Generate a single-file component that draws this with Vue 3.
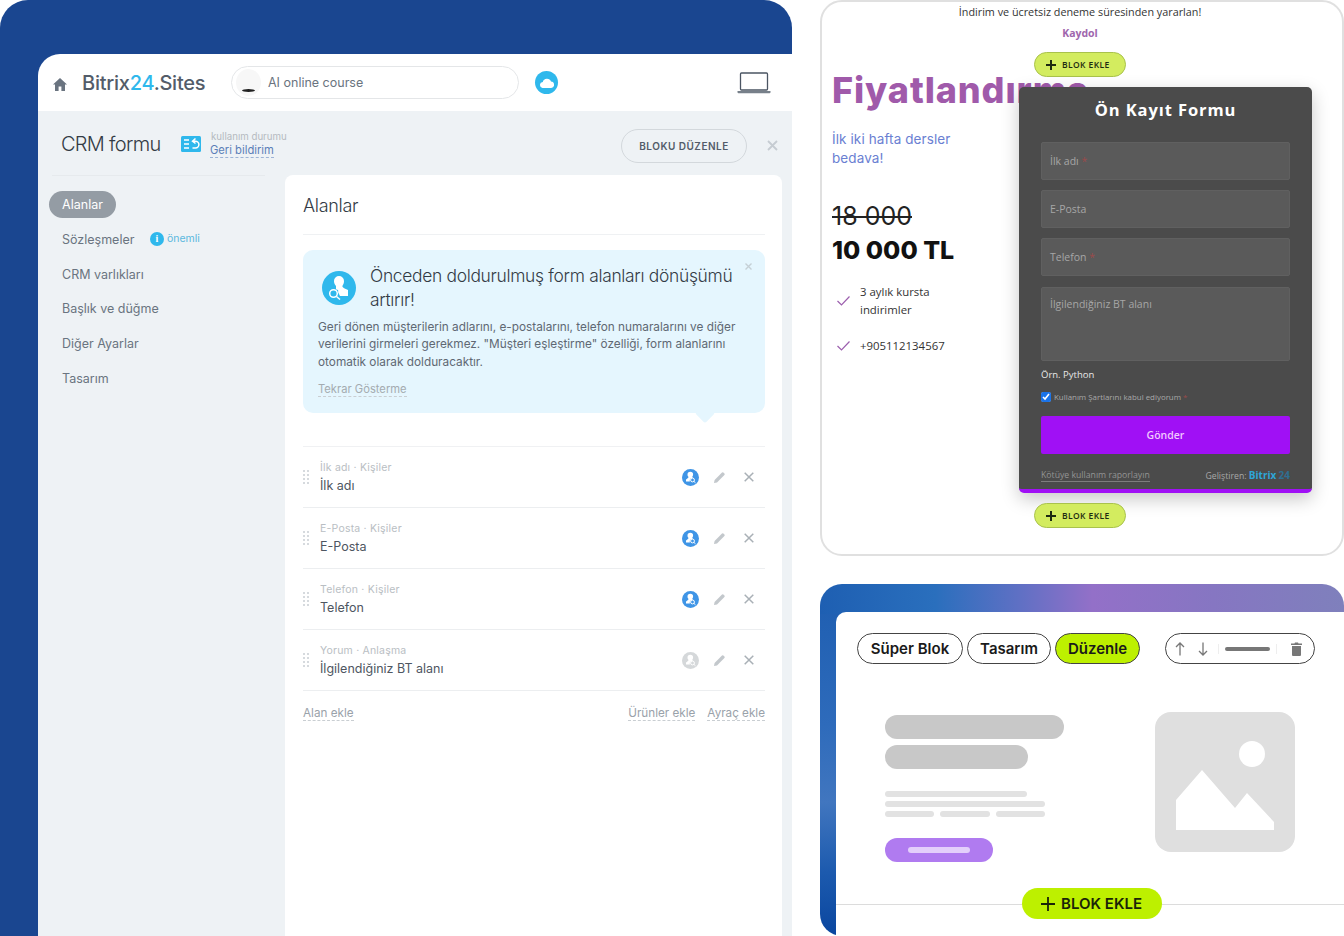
<script setup>
const navItems = ['Sözleşmeler', 'CRM varlıkları', 'Başlık ve düğme', 'Diğer Ayarlar', 'Tasarım']
const fields = [
  { meta: 'İlk adı · Kişiler', name: 'İlk adı', on: true },
  { meta: 'E-Posta · Kişiler', name: 'E-Posta', on: true },
  { meta: 'Telefon · Kişiler', name: 'Telefon', on: true },
  { meta: 'Yorum · Anlaşma', name: 'İlgilendiğiniz BT alanı', on: false }
]
</script>

<template>
  <div class="page">
    <section class="builder">
      <div class="window">
        <header class="topbar">
          <svg class="home" width="14" height="13" viewBox="0 0 14 13"><path d="M7 0 14 6.5H12V13H8.4V8.6H5.6V13H2V6.5H0Z" fill="#6a7480"/></svg>
          <div class="logo">Bitrix<span>24</span>.Sites</div>
          <div class="site-pill">
            <div class="thumb"><i></i></div>
            <span>AI online course</span>
          </div>
          <div class="cloud">
            <svg width="14" height="10" viewBox="0 0 14 10"><path d="M3.2 10a3 3 0 0 1-.4-6A4.3 4.3 0 0 1 11 3.6 3.2 3.2 0 0 1 10.8 10Z" fill="#fff"/></svg>
          </div>
          <svg class="laptop" width="34" height="22" viewBox="0 0 34 22"><rect x="3.5" y="1" width="27" height="17" rx="1" fill="none" stroke="#4b5563" stroke-width="1.3"/><path d="M0.5 19h33v1.2a1 1 0 0 1-1 1h-31a1 1 0 0 1-1-1Z" fill="#77808a"/></svg>
        </header>
        <div class="workspace">
          <div class="title-row">
            <div class="title-left">
              <h1>CRM formu</h1>
              <svg class="exchange" width="20" height="16" viewBox="0 0 20 16">
                <rect width="20" height="16" rx="1.5" fill="#2fb8ec"/>
                <path d="M3 4h5M3 8h5M3 12h5" stroke="#fff" stroke-width="1.6"/>
                <path d="M14.5 2.500 11.500 5.200 14.500 7.500M11.500 5.200h3a3.400 3.400 0 0 1 0 6.800h-3" fill="none" stroke="#fff" stroke-width="1.5"/>
              </svg>
              <div class="usage">
                <small>kullanım durumu</small>
                <a>Geri bildirim</a>
              </div>
            </div>
            <button class="edit-btn">BLOKU DÜZENLE</button>
            <svg class="title-close" width="11" height="11" viewBox="0 0 11 11"><path d="M1 1l9 9M10 1l-9 9" stroke="#c6ccd2" stroke-width="1.8"/></svg>
          </div>
          <div class="columns">
            <aside class="sidebar">
              <div class="sidebar-line"></div>
              <div class="nav-active">Alanlar</div>
              <div v-for="item in navItems" :key="item" class="nav-item">
                {{ item }}
                <span v-if="item === 'Sözleşmeler'" class="important">
                  <i>i</i>önemli
                </span>
              </div>
            </aside>
            <main class="card">
              <h2>Alanlar</h2>
              <div class="tip">
                <svg class="tip-close" width="7" height="7" viewBox="0 0 7 7"><path d="M.5.5l6 6M6.500.5l-6 6" stroke="#c5d0d6" stroke-width="1.400"/></svg>
                <div class="tip-head">
                  <svg width="34" height="34" viewBox="0 0 34 34">
                    <circle cx="17" cy="17" r="17" fill="#2fb8ec"/>
                    <path d="M14 15c-1.500-2-2-3-2-5a5 5 0 0 1 10 0c0 2-.6 3.500-1.600 5 0 1.400 1 2 5.600 4v6H18l-2-4c1-1.500-.5-3-2-2.500Z" fill="#fff"/>
                    <circle cx="11.500" cy="22.500" r="3.800" fill="none" stroke="#fff" stroke-width="1.500"/>
                    <path d="M14.500 25.500l3.500 3" stroke="#fff" stroke-width="1.500"/>
                  </svg>
                  <h3>Önceden doldurulmuş form alanları dönüşümü artırır!</h3>
                </div>
                <p>Geri dönen müşterilerin adlarını, e-postalarını, telefon numaralarını ve diğer verilerini girmeleri gerekmez. "Müşteri eşleştirme" özelliği, form alanlarını otomatik olarak dolduracaktır.</p>
                <a class="dashed muted">Tekrar Gösterme</a>
              </div>
              <div class="field-list">
                <div v-for="f in fields" :key="f.meta" class="field-row">
                  <div class="grip"><i v-for="n in 8" :key="n"></i></div>
                  <div class="field-text">
                    <small>{{ f.meta }}</small>
                    <span>{{ f.name }}</span>
                  </div>
                  <svg class="crm-icon" width="17" height="17" viewBox="0 0 17 17">
                    <circle cx="8.500" cy="8.500" r="8.500" :fill="f.on ? '#3f95e6' : '#d5d8da'"/>
                    <path d="M6.500 8c-.8-1-1-1.600-1-2.500a2.800 2.800 0 0 1 5.600 0c0 1-.3 1.800-.9 2.500 0 .4.500.8 1 1.100-1.500-.3-2.800.4-3.300 1.700-.2.600-.2 1.200 0 1.700H4V10.500c1-.8 2.400-1.400 2.500-2.500Z" fill="#fff"/>
                    <circle cx="10.500" cy="11" r="1.900" fill="none" stroke="#fff" stroke-width="1"/>
                    <path d="M12 12.500l1.500 1.300" stroke="#fff" stroke-width="1"/>
                  </svg>
                  <svg class="pencil" width="11" height="11" viewBox="0 0 11 11"><path d="M0 11l.6-3L8 .6a1 1 0 0 1 1.400 0l1 1a1 1 0 0 1 0 1.400L3 10.400Z" fill="#c3c8cc"/></svg>
                  <svg class="row-close" width="10" height="10" viewBox="0 0 10 10"><path d="M.7.7l8.600 8.600M9.300.7.700 9.300" stroke="#a9b0b6" stroke-width="1.500"/></svg>
                </div>
              </div>
              <div class="card-links">
                <a class="dashed">Alan ekle</a>
                <a class="dashed push">Ürünler ekle</a>
                <a class="dashed">Ayraç ekle</a>
              </div>
            </main>
          </div>
        </div>
      </div>
    </section>

    <div class="right">
      <section class="preview">
        <p class="promo">İndirim ve ücretsiz deneme süresinden yararlan!</p>
        <p class="signup">Kaydol</p>
        <div class="pricing">
          <h2>Fiyatlandırma</h2>
          <p class="free">İlk iki hafta dersler<br>bedava!</p>
          <div class="old-price">18 000</div>
          <div class="new-price">10 000 TL</div>
          <div class="check-row">
            <svg width="13" height="10" viewBox="0 0 13 10"><path d="M.5 5l4 4 8-8.500" fill="none" stroke="#9c5fae" stroke-width="1.200"/></svg>
            <span>3 aylık kursta<br>indirimler</span>
          </div>
          <div class="check-row">
            <svg width="13" height="10" viewBox="0 0 13 10"><path d="M.5 5l4 4 8-8.500" fill="none" stroke="#9c5fae" stroke-width="1.200"/></svg>
            <span>+905112134567</span>
          </div>
        </div>
        <button class="small-add top-add">
          <svg width="10" height="10" viewBox="0 0 10 10"><path d="M5 0v10M0 5h10" stroke="#1d2a10" stroke-width="2"/></svg>
          BLOK EKLE
        </button>
        <form class="crm-form" @submit.prevent>
          <h3>Ön Kayıt Formu</h3>
          <div class="input">İlk adı <em>*</em></div>
          <div class="input">E-Posta</div>
          <div class="input">Telefon <em>*</em></div>
          <div class="input area">İlgilendiğiniz BT alanı</div>
          <div class="hint">Örn. Python</div>
          <label class="terms">
            <input type="checkbox" checked>
            <span>Kullanım Şartlarını kabul ediyorum <em>*</em></span>
          </label>
          <button class="send">Gönder</button>
          <div class="form-foot">
            <a>Kötüye kullanım raporlayın</a>
            <span>Geliştiren: <b>Bitrix</b> <b class="dim">24</b></span>
          </div>
        </form>
        <button class="small-add bottom-add">
          <svg width="10" height="10" viewBox="0 0 10 10"><path d="M5 0v10M0 5h10" stroke="#1d2a10" stroke-width="2"/></svg>
          BLOK EKLE
        </button>
      </section>

      <section class="editor">
        <div class="sheet">
          <div class="tools">
            <div class="tool w106">Süper Blok</div>
            <div class="tool w84">Tasarım</div>
            <div class="tool w85 lime">Düzenle</div>
            <div class="controls">
              <svg width="10" height="14" viewBox="0 0 10 14"><path d="M5 13.500V1M1 5l4-4 4 4" fill="none" stroke="#777" stroke-width="1.300"/></svg>
              <svg width="10" height="14" viewBox="0 0 10 14"><path d="M5 .5V13M1 9l4 4 4-4" fill="none" stroke="#777" stroke-width="1.300"/></svg>
              <i class="ctl-sep"></i>
              <i class="ctl-bar"></i>
              <i class="ctl-sep"></i>
              <svg width="11" height="14" viewBox="0 0 11 14"><path d="M0 1.500h3.500L4 .5h3l.5 1H11V3H0ZM1 4h9v9a1 1 0 0 1-1 1H2a1 1 0 0 1-1-1Z" fill="#777"/></svg>
            </div>
          </div>
          <div class="mock">
            <div class="mock-text">
              <i class="bar-lg w178"></i>
              <i class="bar-lg w143 gap6"></i>
              <i class="bar-sm w142 gap22"></i>
              <i class="bar-sm w160 gap4"></i>
              <div class="bar-split"><i></i><i></i><i></i></div>
              <div class="mock-btn"><i></i></div>
            </div>
            <svg class="mock-img" width="140" height="140" viewBox="0 0 140 140">
              <rect width="140" height="140" rx="16" fill="#dfdfdf"/>
              <circle cx="97" cy="42" r="13" fill="#fff"/>
              <path d="M21 118V88L47 58 80 96 92 81 119 110V118Z" fill="#fff"/>
            </svg>
          </div>
          <div class="add-line">
            <button class="big-add">
              <svg width="14" height="14" viewBox="0 0 14 14"><path d="M7 0v14M0 7h14" stroke="#1a2408" stroke-width="1.800"/></svg>
              BLOK EKLE
            </button>
          </div>
        </div>
      </section>
    </div>
  </div>
</template>

<style>
html, body { margin: 0; background: #fff; }
</style>

<style scoped>
* { box-sizing: border-box; }
.page {
  width: 1344px;
  height: 936px;
  overflow: hidden;
  display: grid;
  grid-template-columns: 792px 524px;
  column-gap: 28px;
  font-family: "Inter", "Liberation Sans", sans-serif;
  background: #fff;
}
h1, h2, h3, p { margin: 0; font-weight: 400; }

/* left */
.builder {
  height: 936px;
  padding: 54px 0 0 38px;
  background: #1a4690;
  border-radius: 28px 28px 0 0;
}
.window { height: 882px; display: flex; flex-direction: column; border-radius: 22px 0 0 0; overflow: hidden; }
.topbar {
  height: 57px;
  flex: none;
  background: #fff;
  display: flex;
  align-items: center;
  padding-left: 15px;
}
.home { margin-top: 3px; }
.logo { margin-left: 15px; font-size: 20px; font-weight: 500; color: #535c69; width: 149px; white-space: nowrap; letter-spacing: -.25px; }
.logo span { color: #2fb8ec; }
.site-pill {
  width: 288px;
  height: 33px;
  border: 1px solid #e4e6e8;
  border-radius: 17px;
  display: flex;
  align-items: center;
  padding-left: 4px;
  font-size: 12.500px;
  color: #6a7480;
}
.thumb { width: 25px; height: 27px; border-radius: 50%; position: relative; margin-right: 7px; background: #f7f7f7; overflow: hidden; }
.thumb i { position: absolute; left: 6px; bottom: 4px; width: 13px; height: 3px; border-radius: 50%; background: #222; }
.cloud { width: 23px; height: 23px; border-radius: 50%; background: #2fb8ec; display: flex; align-items: center; justify-content: center; margin-left: 16px; }
.laptop { margin-left: 179px; }
.workspace { flex: 1; background: #eef2f5; }
.title-row { height: 64px; display: flex; align-items: center; padding: 2px 0 0 23px; }
.title-left { width: 560px; display: flex; align-items: center; }
.title-left h1 { font-size: 20px; font-weight: 300; color: #333b45; letter-spacing: -.7px; width: 120px; white-space: nowrap; }
.exchange { margin-right: 9px; }
.usage { display: flex; flex-direction: column; align-items: flex-start; }
.usage small { font-size: 9.700px; color: #b5bac0; line-height: 12px; padding-left: 1px; }
.usage a { font-size: 11.200px; color: #5b7fb8; line-height: 14px; border-bottom: 1px dashed #9db4d6; }
.edit-btn {
  width: 126px;
  height: 34px;
  margin-top: 4px;
  border: 1px solid #d3d8dc;
  border-radius: 17px;
  background: transparent;
  font: 600 10px "Inter", sans-serif;
  letter-spacing: .5px;
  color: #535c69;
  padding: 0;
}
.title-close { margin: 2px 0 0 20px; }
.columns { display: flex; height: 761px; }
.sidebar { width: 247px; padding-left: 11px; }
.sidebar-line { width: 213px; height: 1px; background: #e6eaed; margin: 0 0 15px 3px; }
.nav-active {
  width: 67px;
  height: 27px;
  border-radius: 14px;
  background: #949ca4;
  color: #fff;
  font-size: 12.500px;
  line-height: 27px;
  text-align: center;
  margin-bottom: 5px;
}
.nav-item {
  height: 34.700px;
  line-height: 34.700px;
  padding-left: 13px;
  font-size: 12.500px;
  color: #6a7480;
  white-space: nowrap;
  position: relative;
}
.important { position: absolute; left: 101px; top: 1px; font-size: 10.500px; color: #5bb8de; display: flex; align-items: center; line-height: 30px; }
.important i {
  width: 14px; height: 14px; border-radius: 50%; background: #2fb8ec; color: #fff;
  font: 700 10px/14px "Liberation Serif", serif; text-align: center; margin-right: 3px;
}
.card {
  width: 497px;
  background: #fff;
  border-radius: 8px 8px 0 0;
  padding: 0 17px 0 18px;
}
.card h2 { height: 60px; line-height: 61px; font-size: 18px; font-weight: 300; color: #333b45; border-bottom: 1px solid #eff1f3; letter-spacing: -.3px; }
.tip {
  position: relative;
  margin-top: 15px;
  height: 163px;
  background: #e5f6fe;
  border-radius: 10px;
  padding: 14px 15px 0;
}
.tip::after {
  content: "";
  position: absolute;
  right: 50px;
  bottom: -10px;
  width: 20px;
  height: 20px;
  background: #e5f6fe;
  transform: rotate(45deg) scale(.72);
  border-radius: 3px;
}
.tip-close { position: absolute; right: 13px; top: 13px; }
.tip-head { display: flex; align-items: center; }
.tip-head svg { flex: none; margin: 0 14px 0 4px; }
.tip-head h3 { font-size: 17.400px; font-weight: 300; line-height: 24px; color: #333b45; letter-spacing: -.3px; }
.tip p { font-size: 11.800px; line-height: 17.400px; color: #5f6873; margin-top: 7px; width: 430px; }
.dashed { border-bottom: 1px dashed #c9ced2; color: #9aa2aa; }
.muted { display: inline-block; margin-top: 11px; font-size: 11.200px; line-height: 14px; color: #a4abb0; }
.field-list { margin-top: 33px; border-top: 1px solid #f0f1f3; }
.field-row { height: 61px; display: flex; align-items: center; border-bottom: 1px solid #eceef0; padding-right: 11px; }
.grip { width: 7px; display: grid; grid-template-columns: 2px 2px; gap: 2px 2px; margin-right: 10px; margin-top: -1px; }
.grip i { width: 2px; height: 2px; background: #d6dade; }
.field-text { flex: 1; display: flex; flex-direction: column; }
.field-text small { font-size: 10.500px; line-height: 14px; color: #b9bec3; letter-spacing: .2px; margin-bottom: 3px; }
.field-text span { font-size: 12.500px; line-height: 16px; color: #4e5661; }
.pencil { margin-left: 15px; margin-right: 19px; }
.card-links { display: flex; gap: 12px; margin-top: 15px; font-size: 11.700px; line-height: 14px; }
.push { margin-left: auto; }

/* right top */
.right { display: flex; flex-direction: column; gap: 28px; }
.preview {
  position: relative;
  height: 556px;
  border: 2px solid #e0e0e0;
  border-radius: 22px;
  font-family: "Open Sans", sans-serif;
  overflow: hidden;
  background: #fff;
}
.promo { text-align: center; font-size: 10.800px; line-height: 16px; margin-top: 2px; padding-right: 4px; color: #333; }
.signup { text-align: center; font-size: 10.500px; font-weight: 700; color: #a066ad; margin-top: 6px; line-height: 14px; padding-right: 4px; }
.pricing { padding: 30px 0 0 10px; }
.pricing h2 {
  font: 800 36px/40px "Inter", sans-serif;
  color: #a05aaa;
  white-space: nowrap;
  letter-spacing: .9px;
}
.free { margin-top: 20px; font: 400 13.500px/19px "Inter", sans-serif; color: #6a80d2; letter-spacing: .1px; }
.old-price { margin-top: 33px; font: 400 25px/30px "Inter", sans-serif; color: #222; text-decoration: line-through; text-decoration-thickness: 2px; }
.new-price { margin-top: 3px; font: 800 25px/32px "Inter", sans-serif; color: #111; }
.check-row { display: flex; align-items: center; gap: 10px; margin: 17px 0 0 5px; font-size: 11.400px; line-height: 18px; color: #333; }
.check-row + .check-row { margin-top: 18px; }
.small-add {
  position: absolute;
  left: 212px;
  width: 92px;
  height: 25px;
  border: 1px solid #a9c24c;
  border-radius: 13px;
  background: #d3ec5f;
  font: 600 8.500px/23px "Open Sans", sans-serif;
  color: #1d2a10;
  letter-spacing: .4px;
  padding: 0 0 0 11px;
  display: flex;
  align-items: center;
  gap: 6px;
}
.top-add { top: 50px; }
.bottom-add { top: 501px; }
.crm-form {
  position: absolute;
  left: 197px;
  top: 85px;
  width: 293px;
  height: 406px;
  background: #4b4b4b;
  border-bottom: 4px solid #a010f5;
  border-radius: 5px;
  box-shadow: 0 6px 18px rgba(0, 0, 0, .22);
  padding: 11px 22px 0;
}
.crm-form h3 { text-align: center; color: #fff; font-size: 16.500px; font-weight: 700; letter-spacing: .9px; line-height: 24px; margin-bottom: 20px; }
.input {
  height: 38px;
  margin-bottom: 10.200px;
  background: #5a5a5a;
  border: 1px solid #606060;
  border-radius: 2px;
  padding: 0 8px;
  line-height: 36px;
  font-size: 10.500px;
  color: #a6a6a6;
}
.input em, .terms em { color: #9c4a4a; font-style: normal; }
.area { height: 74px; line-height: 32px; margin-bottom: 7px; }
.hint { font-size: 9.500px; line-height: 14px; color: #e8e8e8; margin-top: 0; }
.terms { display: flex; align-items: center; margin-top: 9px; height: 12px; font-size: 7.900px; color: #a8a8a8; }
.terms input { margin: 0 3px 0 0; width: 10px; height: 10px; accent-color: #1a73e8; }
.send {
  display: block;
  width: 249px;
  height: 38px;
  margin-top: 13px;
  border: 0;
  border-radius: 2px;
  background: #a010f5;
  color: #f2c8ff;
  font: 600 10.500px "Open Sans", sans-serif;
}
.form-foot { display: flex; justify-content: space-between; align-items: center; margin-top: 15px; font-size: 8.700px; color: #a8a8a8; line-height: 12px; }
.form-foot a { border-bottom: 1px solid #7d7d7d; color: #949494; }
.form-foot b { color: #2ea6d8; font-size: 10px; }
.form-foot b.dim { color: #2f6f92; }

/* right bottom */
.editor {
  height: 352px;
  padding: 28px 0 0 16px;
  border-radius: 22px 22px 0 22px;
  background:
    linear-gradient(90deg, #1e5fb2 0%, #2a6fbd 22%, #5f70c4 38%, #9370c8 52%, #8676c2 75%, #7f80bc 100%) top / 100% 30px no-repeat,
    linear-gradient(180deg, #1d5db0 0%, #2e6bbb 40%, #4176bf 62%, #1c5aae 82%, #0a469f 100%);
}
.sheet { height: 324px; background: #fff; border-radius: 10px 0 0 0; position: relative; }
.tools { display: flex; padding: 21px 0 0 21px; font: 600 15px "Inter", sans-serif; color: #1a1a1a; }
.tool { height: 31px; line-height: 29px; text-align: center; border: 1px solid #444; border-radius: 16px; margin-right: 4px; white-space: nowrap; }
.w106 { width: 106px; }
.w84 { width: 84px; }
.w85 { width: 85px; }
.tool.lime { background: #bdf000; }
.controls {
  width: 150px;
  height: 31px;
  margin-left: 21px;
  border: 1px solid #444;
  border-radius: 16px;
  display: flex;
  align-items: center;
  padding-left: 9px;
}
.controls svg:nth-child(2) { margin-left: 13px; }
.ctl-sep { width: 1px; height: 10px; background: #eee; margin: 0 6px 0 10px; }
.ctl-bar { width: 45px; height: 4px; border-radius: 2px; background: #777; }
.ctl-bar + .ctl-sep { margin: 0 14px 0 6px; }
.mock { display: flex; padding: 51px 0 0 49px; }
.mock-text { width: 270px; }
.mock-text i { display: block; }
.mock-img { margin-top: -3px; }
.bar-lg { height: 24px; border-radius: 12px; background: #c8c8c8; }
.bar-sm { height: 6px; border-radius: 3px; background: #e2e2e2; }
.w178 { width: 179px; }
.w143 { width: 143px; }
.w142 { width: 142px; }
.w160 { width: 160px; }
.gap6 { margin-top: 6px; }
.gap22 { margin-top: 22px; }
.gap4 { margin-top: 4px; }
.bar-split { display: flex; gap: 6px; margin-top: 4px; width: 160px; }
.bar-split i { flex: 1; height: 6px; border-radius: 3px; background: #e2e2e2; }
.mock-btn { width: 108px; height: 24px; margin-top: 21px; border-radius: 12px; background: #b07bf0; display: flex; align-items: center; justify-content: center; }
.mock-btn i { width: 62px; height: 6px; border-radius: 3px; background: #e3cffb; }
.add-line { position: absolute; left: 0; right: 0; top: 292px; height: 1px; background: #dcdcdc; }
.big-add {
  position: absolute;
  left: 186px;
  top: -16px;
  width: 140px;
  height: 31px;
  border: 0;
  border-radius: 16px;
  background: #bdf000;
  color: #1a2408;
  font: 600 15px "Inter", sans-serif;
  display: flex;
  align-items: center;
  gap: 6px;
  padding: 0 0 0 19px;
}
</style>
